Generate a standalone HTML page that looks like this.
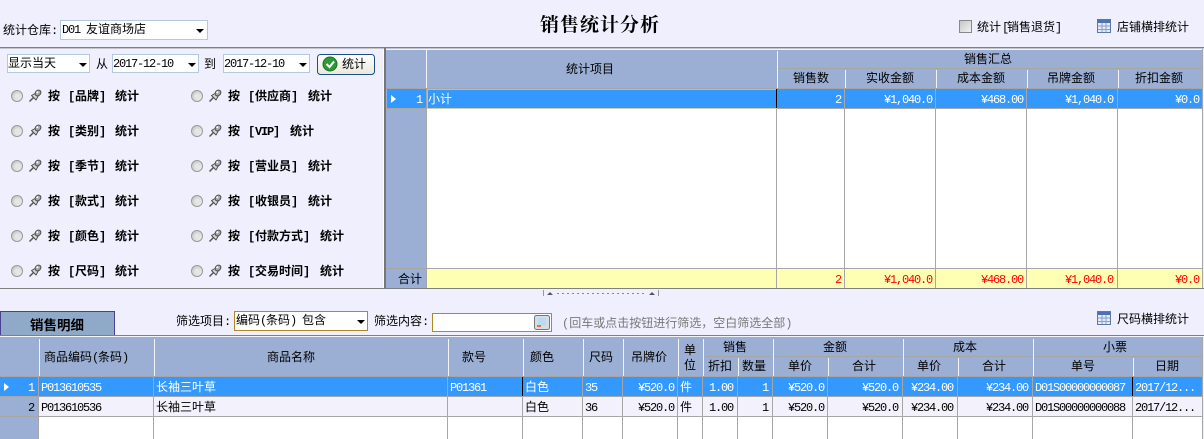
<!DOCTYPE html>
<html lang="zh"><head><meta charset="utf-8"><title>销售统计分析</title>
<style>
html,body{margin:0;padding:0;width:1204px;height:439px;overflow:hidden;background:#EFEFFE}
svg{display:block}
text{font-family:"Liberation Mono","WenQuanYi Zen Hei","Noto Sans CJK SC",monospace;font-size:12px;fill:#000}
.m{font-size:12px;letter-spacing:-1.2px}
.c{text-anchor:middle}
.e{text-anchor:end}
.w{fill:#fff}
.r{fill:#f00}
.b{font-weight:bold}
.g{fill:#777}
.gl{stroke:#A6A6A6;stroke-width:1;shape-rendering:crispEdges}
.wl{stroke:#F2F4FA;stroke-width:1;shape-rendering:crispEdges}
</style></head><body>
<svg width="1204" height="439" viewBox="0 0 1204 439" xmlns="http://www.w3.org/2000/svg">
<defs>
<linearGradient id="gr" x1="0" y1="0" x2="1" y2="1"><stop offset="0" stop-color="#c4c4c4"/><stop offset="1" stop-color="#f4f4f4"/></linearGradient>
<linearGradient id="bt" x1="0" y1="0" x2="0" y2="1"><stop offset="0" stop-color="#fff"/><stop offset="1" stop-color="#ebe7dc"/></linearGradient>
<g id="opt">
<circle cx="0" cy="0" r="5.5" fill="url(#gr)" stroke="#999"/>
<circle cx="0" cy="0" r="2.5" fill="#e6e6e6"/>
<path d="M12.500 5.500 L17 1" stroke="#555" stroke-width="1.500"/>
<path d="M14.500 -.5 L19 -3 L21.500 -.5 L19 4 Z" fill="#d4d4d4" stroke="#4a4a4a" stroke-width=".9" stroke-linejoin="round"/>
<ellipse cx="21" cy="-3" rx="3.200" ry="2.600" transform="rotate(-45 21 -3)" fill="#a8a8a8" stroke="#444" stroke-width=".9"/>
<circle cx="20.300" cy="-3.700" r="1" fill="#fff"/>
</g>
<g id="tb">
<rect x=".5" y=".5" width="13" height="13" fill="#E4EAF8" stroke="#5A78A8"/>
<rect x="1" y="1" width="12" height="3" fill="#4C74B4"/>
<path d="M1 7H13M1 10.500H13M5 4V13M9 4V13" stroke="#8AA0C8" fill="none"/>
</g>
<path id="arr" d="M0 0H8L4 4Z" fill="#000"/>
</defs>

<rect width="1204" height="439" fill="#EFEFFE"/>

<!-- top bar -->
<text x="3" y="34">统计仓库:</text>
<rect x="60.500" y="20.500" width="147" height="19" fill="#fff" stroke="#B4C8E0"/>
<text x="62" y="33"><tspan class="m">D01</tspan></text>
<text x="86" y="33">友谊商场店</text>
<use href="#arr" x="196" y="29"/>
<text x="600" y="31" class="c b" style="font-size:19px;letter-spacing:1px;font-family:'Noto Serif CJK SC','Noto Sans CJK SC',serif">销售统计分析</text>
<rect x="959.500" y="20.500" width="12" height="12" fill="url(#gr)" stroke="#888"/>
<text x="977 989 1002 1007 1019 1031 1043 1055" y="31">统计[销售退货]</text>
<use href="#tb" x="1097" y="19"/>
<text x="1117" y="31">店铺横排统计</text>
<rect x="0" y="47" width="1204" height="1" fill="#808080"/>
<rect x="0" y="48" width="1204" height="1" fill="#C4C4CC"/>

<!-- left panel -->
<rect x="7.500" y="54.500" width="82" height="18" fill="#fff" stroke="#B4C8E0"/>
<text x="8" y="67">显示当天</text>
<use href="#arr" x="79" y="63"/>
<text x="96" y="68">从</text>
<rect x="112.500" y="54.500" width="86" height="18" fill="#fff" stroke="#B4C8E0"/>
<text x="113" y="67" class="m">2017-12-10</text>
<use href="#arr" x="188" y="63"/>
<text x="204" y="68">到</text>
<rect x="223.500" y="54.500" width="86" height="18" fill="#fff" stroke="#B4C8E0"/>
<text x="224" y="67" class="m">2017-12-10</text>
<use href="#arr" x="299" y="63"/>
<rect x="317.500" y="54.500" width="57" height="20" rx="3" fill="url(#bt)" stroke="#1C4E88"/>
<circle cx="330" cy="64" r="7" fill="#2E9A36" stroke="#1F6E28"/>
<path d="M326.500 64L329.500 67L334 61.500" fill="none" stroke="#fff" stroke-width="2"/>
<text x="342" y="68">统计</text>

<use href="#opt" x="17" y="96"/><use href="#opt" x="197" y="96"/>
<use href="#opt" x="17" y="131"/><use href="#opt" x="197" y="131"/>
<use href="#opt" x="17" y="166"/><use href="#opt" x="197" y="166"/>
<use href="#opt" x="17" y="201"/><use href="#opt" x="197" y="201"/>
<use href="#opt" x="17" y="236"/><use href="#opt" x="197" y="236"/>
<use href="#opt" x="17" y="271"/><use href="#opt" x="197" y="271"/>

<g class="b">
<text class="b" y="100" x="48 60 68 75 87 99 108 115 127">按 [品牌] 统计</text>
<text class="b" y="135" x="48 60 68 75 87 99 108 115 127">按 [类别] 统计</text>
<text class="b" y="170" x="48 60 68 75 87 99 108 115 127">按 [季节] 统计</text>
<text class="b" y="205" x="48 60 68 75 87 99 108 115 127">按 [款式] 统计</text>
<text class="b" y="240" x="48 60 68 75 87 99 108 115 127">按 [颜色] 统计</text>
<text class="b" y="275" x="48 60 68 75 87 99 108 115 127">按 [尺码] 统计</text>
<text class="b" y="100" x="228 240 248 255 267 279 291 300 308 320">按 [供应商] 统计</text>
<text class="b" y="135" x="228 240 248 255 261 267 273 282 290 302">按 [VIP] 统计</text>
<text class="b" y="170" x="228 240 248 255 267 279 291 300 308 320">按 [营业员] 统计</text>
<text class="b" y="205" x="228 240 248 255 267 279 291 300 308 320">按 [收银员] 统计</text>
<text class="b" y="240" x="228 240 248 255 267 279 291 303 312 320 332">按 [付款方式] 统计</text>
<text class="b" y="275" x="228 240 248 255 267 279 291 303 312 320 332">按 [交易时间] 统计</text>
</g>

<rect x="383" y="49" width="1" height="239" fill="#fff"/>
<rect x="384" y="48" width="2" height="240" fill="#777"/>

<!-- top grid -->
<rect x="386" y="49" width="817" height="39" fill="#9BAED4"/>
<rect x="386" y="88" width="41" height="181" fill="#9BAED4"/>
<rect x="386" y="269" width="41" height="20" fill="#9BAED4"/>
<rect x="427" y="89" width="776" height="180" fill="#fff"/>
<rect x="387" y="89" width="816" height="20" fill="#3399FF"/>
<rect x="427" y="269" width="776" height="20" fill="#FFFFB4"/>
<path class="wl" d="M386 49.500H1203M426.500 50V88M777.500 51V88M845.500 70V88M936.500 70V88M1027.500 70V88M1118.500 70V88"/>
<path class="gl" d="M778 68.500H1203M386 88.500H1203M386 108.500H1203M386 268.500H1203M426.500 88V288M776.500 88V288M844.500 88V288M935.500 88V288M1026.500 88V288M1117.500 88V288M1202.500 49V288"/>
<rect x="427.500" y="89.500" width="349" height="19" fill="none" stroke="#FFF7A0" stroke-dasharray="1 1" shape-rendering="crispEdges"/>
<rect x="776" y="89" width="1" height="19" fill="#000"/>
<path d="M391 95V103L396 99Z" fill="#fff"/>
<text x="422" y="103" class="m e w">1</text>
<text x="428" y="103" class="w">小计</text>
<text x="590" y="73" class="c">统计项目</text>
<text x="988" y="63" class="c">销售汇总</text>
<text x="811" y="82" class="c">销售数</text>
<text x="890" y="82" class="c">实收金额</text>
<text x="981" y="82" class="c">成本金额</text>
<text x="1071" y="82" class="c">吊牌金额</text>
<text x="1159" y="82" class="c">折扣金额</text>
<text x="841" y="103" class="m e w">2</text>
<text x="932" y="103" class="m e w">¥1,040.0</text>
<text x="1023" y="103" class="m e w">¥468.00</text>
<text x="1113" y="103" class="m e w">¥1,040.0</text>
<text x="1199" y="103" class="m e w">¥0.0</text>
<text x="398" y="283">合计</text>
<text x="841" y="283" class="m e r">2</text>
<text x="932" y="283" class="m e r">¥1,040.0</text>
<text x="1023" y="283" class="m e r">¥468.00</text>
<text x="1113" y="283" class="m e r">¥1,040.0</text>
<text x="1199" y="283" class="m e r">¥0.0</text>
<rect x="0" y="288" width="1204" height="1" fill="#808080"/>

<!-- splitter -->
<path d="M543.500 290V296M658.500 290V296" stroke="#999" shape-rendering="crispEdges"/>
<path d="M547 295L550 292L553 295ZM649 295L652 292L655 295Z" fill="#555"/>
<path d="M557 293.500H645" stroke="#888" stroke-dasharray="2 3" shape-rendering="crispEdges"/>

<!-- filter bar -->
<rect x="0.500" y="311.500" width="114" height="24" fill="#8FAAC8" stroke="#4A3F90"/>
<text x="57" y="330" class="c b" style="font-size:13.500px">销售明细</text>
<text x="176" y="325">筛选项目:</text>
<rect x="234.500" y="311.500" width="133" height="19" fill="#fff" stroke="#B08828"/>
<text x="236 248 260 266 278 290 296 302 314" y="324">编码(条码) 包含</text>
<use href="#arr" x="357" y="320"/>
<text x="374" y="325">筛选内容:</text>
<rect x="432.500" y="313.500" width="119" height="18" fill="#fff" stroke="#B08828"/>
<rect x="534.500" y="315.500" width="15" height="14" rx="2" fill="#D8DCE8" stroke="#777"/>
<path d="M538 318H546V326H538Z" fill="#B8DCF4"/>
<rect x="537" y="325" width="4" height="2" fill="#E87830"/>
<text x="562" y="327" class="g">(回车或点击按钮进行筛选&#xFF0C;空白筛选全部)</text>
<use href="#tb" x="1097" y="311"/>
<text x="1117" y="323">尺码横排统计</text>
<rect x="0" y="335" width="1204" height="1" fill="#808080"/>

<!-- bottom grid -->
<rect x="0" y="337" width="1203" height="39" fill="#9BAED4"/>
<rect x="0" y="376" width="39" height="63" fill="#9BAED4"/>
<rect x="39" y="417" width="1164" height="22" fill="#fff"/>
<rect x="0" y="377" width="1203" height="20" fill="#3399FF"/>
<rect x="39" y="397" width="1164" height="20" fill="#F3F1FB"/>
<path class="wl" d="M0 336.500H1203M39.500 339V376M154.500 339V376M448.500 339V376M523.500 339V376M583.500 339V376M623.500 339V376M678.500 339V376M703.500 339V376M773.500 339V376M903.500 339V376M1033.500 339V376M738.500 358V376M828.500 358V376M958.500 358V376M1133.500 358V376"/>
<path class="gl" d="M705 356.500H771M775 356.500H901M905 356.500H1031M1035 356.500H1203M0 376.500H1203M0 396.500H1203M0 416.500H1203M38.500 376V439M153.500 376V439M447.500 376V439M522.500 376V439M582.500 376V439M622.500 376V439M677.500 376V439M702.500 376V439M737.500 376V439M772.500 376V439M827.500 376V439M902.500 376V439M957.500 376V439M1032.500 376V439M1132.500 376V439M1202.500 337V439"/>
<rect x="522" y="377" width="1" height="19" fill="#000"/>
<rect x="1132" y="377" width="1" height="19" fill="#000"/>
<path d="M4 383V391L9 387Z" fill="#fff"/>

<text x="44 56 68 80 92 98 110 122" y="361">商品编码(条码)</text>
<text x="291" y="361" class="c">商品名称</text>
<text x="474" y="361" class="c">款号</text>
<text x="542" y="361" class="c">颜色</text>
<text x="601" y="361" class="c">尺码</text>
<text x="649" y="361" class="c">吊牌价</text>
<text x="690" y="354" class="c">单</text>
<text x="690" y="369" class="c">位</text>
<text x="735" y="351" class="c">销售</text>
<text x="720" y="370" class="c">折扣</text>
<text x="754" y="370" class="c">数量</text>
<text x="835" y="351" class="c">金额</text>
<text x="800" y="370" class="c">单价</text>
<text x="864" y="370" class="c">合计</text>
<text x="965" y="351" class="c">成本</text>
<text x="929" y="370" class="c">单价</text>
<text x="994" y="370" class="c">合计</text>
<text x="1115" y="351" class="c">小票</text>
<text x="1083" y="370" class="c">单号</text>
<text x="1167" y="370" class="c">日期</text>

<text x="34" y="391" class="m e w">1</text>
<text x="41" y="391" class="m w">P013610535</text>
<text x="156" y="391" class="w">长袖三叶草</text>
<text x="450" y="391" class="m w">P01361</text>
<text x="525" y="391" class="w">白色</text>
<text x="585" y="391" class="m w">35</text>
<text x="674" y="391" class="m e w">¥520.0</text>
<text x="680" y="391" class="w">件</text>
<text x="733" y="391" class="m e w">1.00</text>
<text x="768" y="391" class="m e w">1</text>
<text x="824" y="391" class="m e w">¥520.0</text>
<text x="898" y="391" class="m e w">¥520.0</text>
<text x="953" y="391" class="m e w">¥234.00</text>
<text x="1028" y="391" class="m e w">¥234.00</text>
<text x="1035" y="391" class="m w">D01S00000000087</text>
<text x="1135" y="391" class="m w">2017/12...</text>

<text x="34" y="411" class="m e">2</text>
<text x="41" y="411" class="m">P013610536</text>
<text x="156" y="411">长袖三叶草</text>
<text x="525" y="411">白色</text>
<text x="585" y="411" class="m">36</text>
<text x="674" y="411" class="m e">¥520.0</text>
<text x="680" y="411">件</text>
<text x="733" y="411" class="m e">1.00</text>
<text x="768" y="411" class="m e">1</text>
<text x="824" y="411" class="m e">¥520.0</text>
<text x="898" y="411" class="m e">¥520.0</text>
<text x="953" y="411" class="m e">¥234.00</text>
<text x="1028" y="411" class="m e">¥234.00</text>
<text x="1035" y="411" class="m">D01S00000000088</text>
<text x="1135" y="411" class="m">2017/12...</text>
</svg>
</body></html>
